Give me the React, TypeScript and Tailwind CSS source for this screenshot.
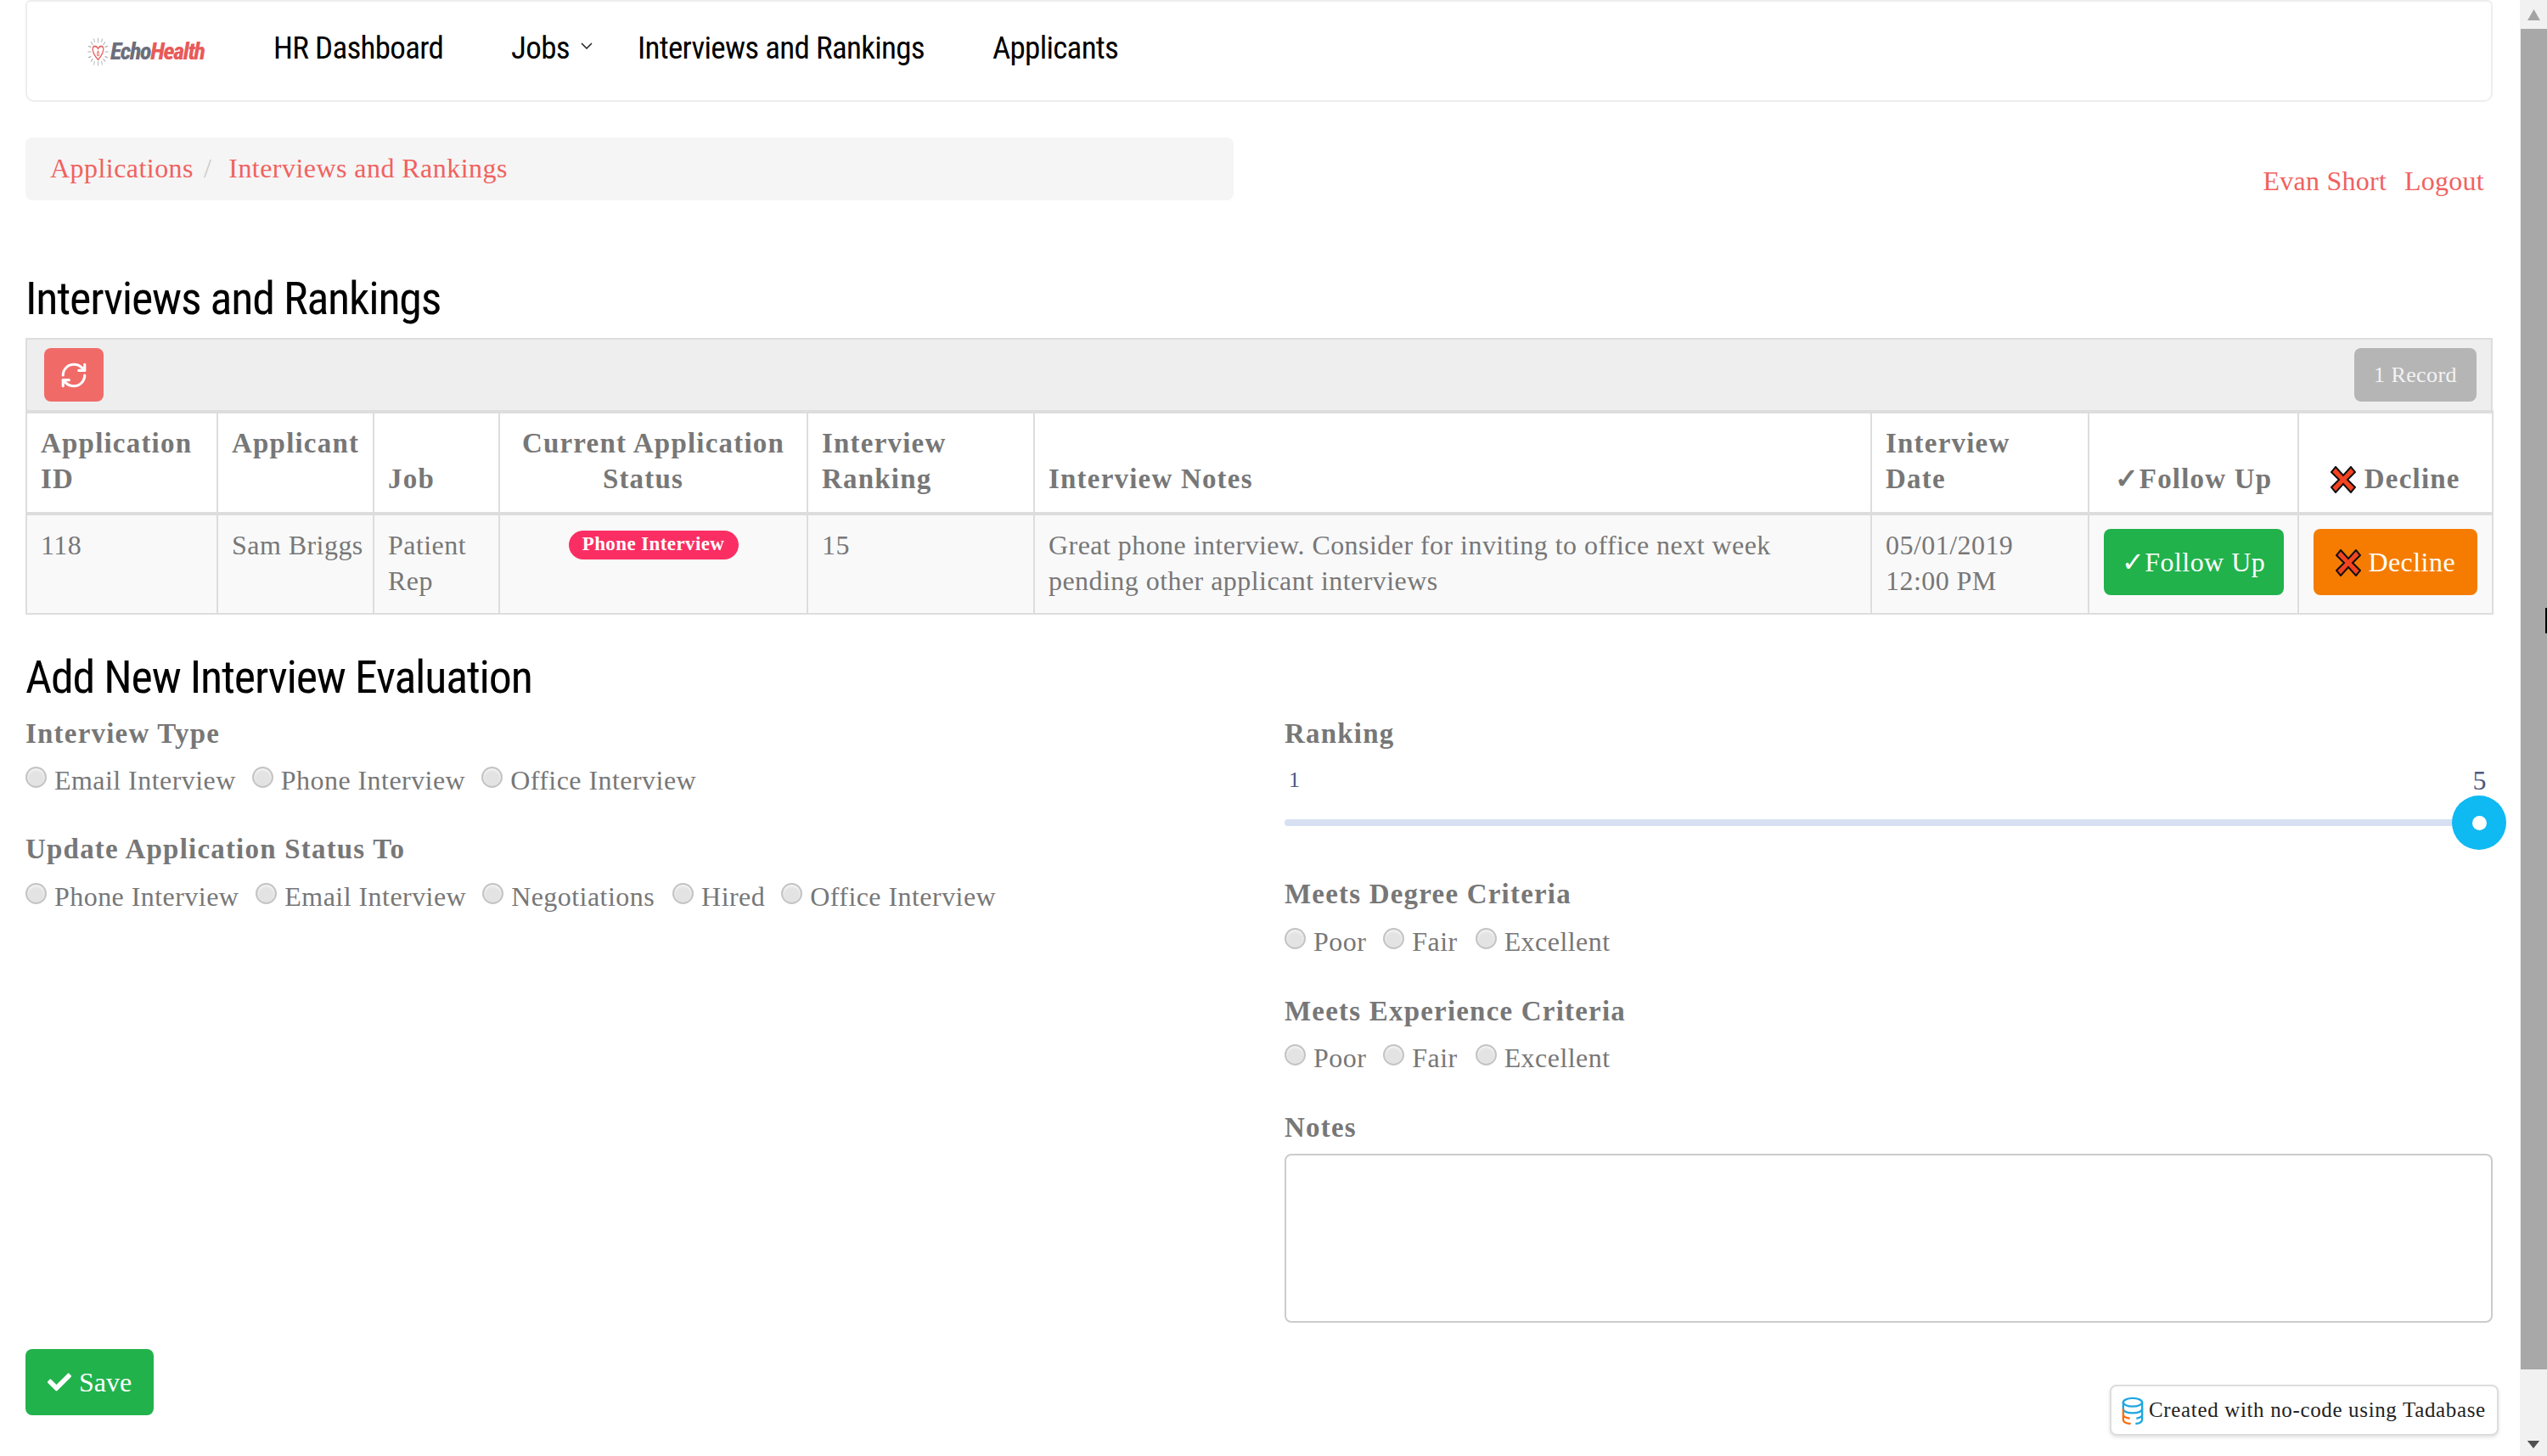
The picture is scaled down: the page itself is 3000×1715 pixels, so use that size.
import { RefreshCw } from "lucide-react";
import { FaCheck } from "react-icons/fa";

const navLinks = ["HR Dashboard", "Jobs", "Interviews and Rankings", "Applicants"];

const headCell = "border-2 border-y-4 border-[#ddd] px-[16px] pt-[14px] pb-[18px] align-bottom font-bold text-left text-[33px] tracking-[1.2px]";
const bodyCell = "border-2 border-b-2 border-[#ddd] px-[16px] pt-[14px] pb-[14px] align-top";
const heading = "[font-family:'Roboto',sans-serif] [font-stretch:75%] font-[430] text-black";
const label = "font-bold text-[33px] tracking-[1.2px]";

const Cross = () => (
  <svg viewBox="0 0 30 32" className="inline-block w-[30px] h-[32px] align-[-6px]">
    <path
      d="M6 1 L15 11 L24 1 L29 7 L20 16 L29 25 L24 31 L15 21 L6 31 L1 25 L10 16 L1 7 Z"
      fill="#f4431f"
      stroke="#111"
      strokeWidth="2"
      strokeLinejoin="miter"
    />
  </svg>
);

const Radios = ({ items }: { items: { label: string; gap: number }[] }) => (
  <div className="flex h-[42px]">
    {items.map((item) => (
      <label key={item.label} className="flex items-start whitespace-nowrap" style={{ marginRight: item.gap }}>
        <input
          type="radio"
          className="appearance-none w-[25px] h-[25px] mt-[5px] mr-[9px] rounded-full border-2 border-[#c4c4c4] bg-[#e3e3e3] shadow-[inset_0_2px_3px_#f6f6f6]"
        />
        {item.label}
      </label>
    ))}
  </div>
);

const Logo = () => (
  <div className="flex items-center w-[139px] h-[36px] mt-[41px]">
    <svg viewBox="0 0 36 36" preserveAspectRatio="none" className="w-[25px] h-[34px] shrink-0">
      <g stroke="#a9abb3" strokeWidth="1.2" strokeLinecap="round">
        <path d="M18 1v5M18 30v5M1 18h5M30 18h5M6 6l3 3M27 27l3 3M6 30l3-3M27 9l3-3M11 2l1 4M25 2l-1 4M11 34l1-4M25 34l-1-4M2 11l4 1M34 11l-4 1M2 25l4-1M34 25l-4-1" />
      </g>
      <path
        d="M18 28 C10 21 8 17 9 13.500 C10 10 15 10 18 14 C21 10 26 10 27 13.500 C28 17 26 21 18 28 Z"
        fill="none"
        stroke="#e85f5f"
        strokeWidth="1.800"
      />
      <path d="M18 17 C16 20 16 23 18 23 C20 23 20 20 18 17 Z" fill="none" stroke="#e85f5f" strokeWidth="1.200" />
    </svg>
    <span className="[font-family:'Roboto',sans-serif] [font-stretch:75%] italic font-extrabold text-[28px] leading-none tracking-[-1.300px] ml-[2px] whitespace-nowrap">
      <span className="text-[#6c6e7b]">Echo</span>
      <span className="text-[#e85a5a]">Health</span>
    </span>
  </div>
);

const App = () => {
  return (
    <div className="relative flex w-[3000px] h-[1715px] overflow-hidden bg-white [font-family:'Liberation_Serif',serif] text-[32px] leading-[42px] tracking-[0.45px] text-[#777]">
      <div className="w-[2968px] pl-[30px] pr-[32px]">
        {/* Nav */}
        <nav className="flex gap-[80px] h-[120px] pl-[71px] border-2 border-[#eee] rounded-b-[10px] rounded-t-[6px]">
          <Logo />
          {navLinks.map((link) => (
            <a
              key={link}
              className={`${heading} text-[37px] leading-[42px] tracking-[-0.7px] mt-[34px] flex whitespace-nowrap ${link === "Jobs" ? "-mr-[27px]" : ""}`}
            >
              {link}
              {link === "Jobs" && (
                <svg viewBox="0 0 14 8" className="w-[14px] h-[8px] ml-[13px] mt-[14px]">
                  <path d="M1 1 L7 7 L13 1" fill="none" stroke="#222" strokeWidth="1.500" />
                </svg>
              )}
            </a>
          ))}
        </nav>

        {/* Breadcrumb + user links */}
        <div className="flex justify-between mt-[42px]">
          <div className="flex w-[1423px] h-[74px] pt-[15px] pl-[29px] rounded-[8px] bg-[#f5f5f5] text-[#f0625f]">
            <span>Applications</span>
            <span className="text-[#ccc] ml-[12px] mr-[20px]">/</span>
            <span>Interviews and Rankings</span>
          </div>
          <div className="flex gap-[21px] pt-[30px] pr-[10px] text-[#f0625f] tracking-[0.25px]">
            <span>Evan Short</span>
            <span>Logout</span>
          </div>
        </div>

        <h1 className={`${heading} text-[54px] leading-[64px] tracking-[-1.2px] mt-[84px] mb-[14px]`}>
          Interviews and Rankings
        </h1>

        {/* Table */}
        <div className="flex items-center justify-between h-[85px] pl-[20px] pr-[17px] border-2 border-b-0 border-[#ddd] bg-[#eee]">
          <button className="flex items-center justify-center w-[70px] h-[63px] rounded-[8px] bg-[#f06b68] text-white">
            <RefreshCw size={34} strokeWidth={2.2} />
          </button>
          <span className="flex items-center justify-center w-[144px] h-[63px] rounded-[8px] bg-[#b5b5b5] text-[#f3f3f3] text-[26px] tracking-[0.4px]">
            1 Record
          </span>
        </div>
        <table className="w-[2905px] table-fixed border-collapse">
          <colgroup>
            <col className="w-[225px]" />
            <col className="w-[184px]" />
            <col className="w-[148px]" />
            <col className="w-[363px]" />
            <col className="w-[267px]" />
            <col className="w-[986px]" />
            <col className="w-[256px]" />
            <col className="w-[247px]" />
            <col className="w-[229px]" />
          </colgroup>
          <thead>
            <tr>
              <th className={headCell}>
                Application
                <br />
                ID
              </th>
              <th className={`${headCell} !align-top`}>Applicant</th>
              <th className={headCell}>Job</th>
              <th className={`${headCell} !text-center !px-0`}>
                Current Application
                <br />
                Status
                <span className="inline-block w-[24px]" />
              </th>
              <th className={headCell}>
                Interview
                <br />
                Ranking
              </th>
              <th className={headCell}>Interview Notes</th>
              <th className={headCell}>
                Interview
                <br />
                Date
              </th>
              <th className={`${headCell} !text-center !px-0`}>✓Follow Up</th>
              <th className={`${headCell} !text-center !px-0`}>
                <Cross /> Decline
              </th>
            </tr>
          </thead>
          <tbody>
            <tr className="bg-[#f9f9f9] h-[118px]">
              <td className={bodyCell}>118</td>
              <td className={`${bodyCell} whitespace-nowrap`}>Sam Briggs</td>
              <td className={bodyCell}>
                Patient
                <br />
                Rep
              </td>
              <td className={`${bodyCell} text-center !pt-[18px]`}>
                <span className="inline-block h-[34px] w-[200px] rounded-full bg-[#fb2e63] text-white font-bold text-[23px] leading-[32px] tracking-[0.4px] align-top">
                  Phone Interview
                </span>
              </td>
              <td className={bodyCell}>15</td>
              <td className={bodyCell}>
                Great phone interview. Consider for inviting to office next week
                <br />
                pending other applicant interviews
              </td>
              <td className={bodyCell}>
                05/01/2019
                <br />
                12:00 PM
              </td>
              <td className={`${bodyCell} !p-0 !pb-[6px] !align-middle`}>
                <button className="block mx-auto w-[212px] h-[78px] rounded-[8px] bg-[#22b24c] text-white">
                  ✓Follow Up
                </button>
              </td>
              <td className={`${bodyCell} !p-0 !pb-[6px] !align-middle`}>
                <button className="block mx-auto w-[193px] h-[78px] rounded-[8px] bg-[#f57c00] text-white whitespace-nowrap">
                  <Cross /> Decline
                </button>
              </td>
            </tr>
          </tbody>
        </table>

        <h2 className={`${heading} text-[54px] leading-[64px] tracking-[-1.2px] mt-[42px] mb-[13px]`}>
          Add New Interview Evaluation
        </h2>

        {/* Form */}
        <div className="grid grid-cols-[1483px_1423px]">
          <div>
            <p className={`${label} mb-[13px]`}>Interview Type</p>
            <Radios
              items={[
                { label: "Email Interview", gap: 19 },
                { label: "Phone Interview", gap: 19 },
                { label: "Office Interview", gap: 0 },
              ]}
            />
            <p className={`${label} mt-[39px] mb-[14px]`}>Update Application Status To</p>
            <Radios
              items={[
                { label: "Phone Interview", gap: 20 },
                { label: "Email Interview", gap: 19 },
                { label: "Negotiations", gap: 21 },
                { label: "Hired", gap: 19 },
                { label: "Office Interview", gap: 0 },
              ]}
            />
          </div>

          <div>
            <p className={`${label} mb-[13px]`}>Ranking</p>
            <div className="flex items-start justify-between text-[#4d5a80] h-[42px] pl-[5px] pr-[7px]">
              <span className="text-[26px]">1</span>
              <span>5</span>
            </div>
            <div className="relative h-[8px] mt-[25px] mb-[59px] rounded-full bg-[#d7dff2]">
              <span className="absolute -right-[16px] -top-[28px] flex items-center justify-center w-[64px] h-[64px] rounded-full bg-[#0fb9f2]">
                <span className="w-[17px] h-[17px] rounded-full bg-white" />
              </span>
            </div>
            <p className={`${label} mb-[14px]`}>Meets Degree Criteria</p>
            <Radios
              items={[
                { label: "Poor", gap: 20 },
                { label: "Fair", gap: 21 },
                { label: "Excellent", gap: 0 },
              ]}
            />
            <p className={`${label} mt-[40px] mb-[13px]`}>Meets Experience Criteria</p>
            <Radios
              items={[
                { label: "Poor", gap: 20 },
                { label: "Fair", gap: 21 },
                { label: "Excellent", gap: 0 },
              ]}
            />
            <p className={`${label} mt-[40px] mb-[10px]`}>Notes</p>
            <textarea className="block w-full h-[199px] resize-none rounded-[8px] border-2 border-[#ccc] bg-white" />
          </div>
        </div>

        <button className="flex items-center justify-center gap-[9px] w-[151px] h-[78px] mt-[31px] rounded-[8px] bg-[#22b24c] text-white text-[32px] tracking-normal">
          <FaCheck size={28} />
          Save
        </button>
      </div>

      {/* Scrollbar */}
      <div className="relative flex flex-col w-[32px] bg-[#f1f1f1]">
        <div className="flex items-center justify-center h-[34px]">
          <svg viewBox="0 0 16 14" className="w-[15px] h-[13px]">
            <path d="M8 0 L16 14 H0 Z" fill="#a3a3a3" />
          </svg>
        </div>
        <div className="h-[1579px] ml-[1px] bg-[#a8a8a8]" />
        <div className="flex flex-1 items-end justify-center pb-[9px]">
          <svg viewBox="0 0 16 10" className="w-[16px] h-[9px]">
            <path d="M0 0 H16 L8 10 Z" fill="#505050" />
          </svg>
        </div>
        <span className="absolute right-0 top-[716px] w-[2px] h-[30px] bg-black" />
      </div>

      {/* Tadabase badge */}
      <div className="absolute right-[57px] bottom-[24px] flex items-center w-[458px] h-[60px] pl-[12px] rounded-[8px] border-2 border-[#ddd] bg-white shadow-[0_2px_4px_rgba(0,0,0,0.12)] text-[#222] text-[25px] tracking-[0.65px]">
        <svg viewBox="0 0 26 34" className="w-[26px] h-[33px] mr-[6px] shrink-0">
          <g fill="none" strokeWidth="2.400">
            <ellipse cx="13" cy="7" rx="11.500" ry="5" stroke="#1ea7e1" />
            <path d="M1.500 7v8c0 3 5 5 11.500 5s11.500-2 11.500-5V7" stroke="#1ea7e1" />
            <path d="M24.500 15v7c0 2.500-3 4-7 4.500M24.500 22v6c0 3-4 4.500-8 5" stroke="#1ea7e1" />
            <path d="M1.500 15v13c0 3 4 4.500 9 5M1.500 22c0 2.500 4 4 8 4.500" stroke="#f96d0f" />
          </g>
        </svg>
        <span className="whitespace-nowrap">Created with no-code using Tadabase</span>
      </div>
    </div>
  );
};

export default App;
